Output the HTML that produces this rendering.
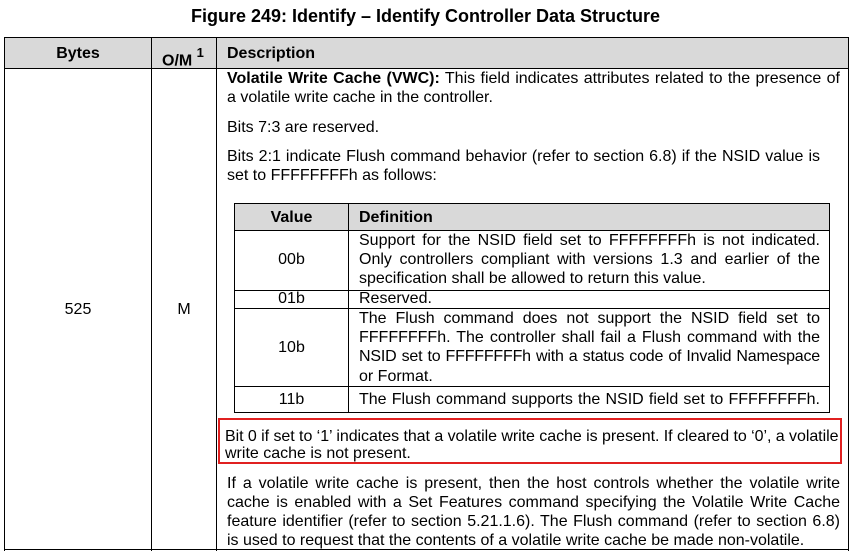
<!DOCTYPE html>
<html><head><meta charset="utf-8"><style>
body{margin:0;width:851px;height:551px;background:#fff;position:relative;overflow:hidden;font-family:"Liberation Sans",Arial,sans-serif;font-size:16px;color:#000}
.a{position:absolute}
.l{position:absolute;white-space:nowrap;line-height:19px}
.j{text-align:justify;text-align-last:justify;white-space:normal}
.h{position:absolute;background:#000}
.c{text-align:center}
</style></head><body>
<div class="a c" style="left:0;width:851px;top:6px;font-weight:bold;font-size:18px">Figure 249: Identify – Identify Controller Data Structure</div>
<div class="a" style="left:5px;top:38px;width:843px;height:30px;background:#d9d9d9"></div>
<div class="h" style="left:4px;top:37px;width:845px;height:1px"></div>
<div class="h" style="left:4px;top:68px;width:845px;height:1px"></div>
<div class="h" style="left:4px;top:37px;width:1px;height:514px"></div>
<div class="h" style="left:848px;top:37px;width:1px;height:514px"></div>
<div class="h" style="left:151px;top:37px;width:1px;height:514px"></div>
<div class="h" style="left:216px;top:37px;width:1px;height:514px"></div>
<div class="h" style="left:4px;top:549px;width:845px;height:1px"></div>
<div class="l c" style="left:5px;width:146px;top:44px;font-weight:bold">Bytes</div>
<div class="l" style="left:162px;top:45px;font-weight:bold">O/M <sup style="font-size:13px;position:relative;top:-2px">1</sup></div>
<div class="l" style="left:227px;top:44px;font-weight:bold">Description</div>
<div class="l c" style="left:5px;width:146px;top:300px">525</div>
<div class="l c" style="left:152px;width:64px;top:300px">M</div>
<div class="l j" style="left:227px;width:613px;top:69px"><b>Volatile Write Cache (VWC):</b> This field indicates attributes related to the presence of</div>
<div class="l" style="left:227px;top:88px">a volatile write cache in the controller.</div>
<div class="l" style="left:227px;top:118px">Bits 7:3 are reserved.</div>
<div class="l j" style="left:227px;width:593px;top:147px">Bits 2:1 indicate Flush command behavior (refer to section 6.8) if the NSID value is</div>
<div class="l" style="left:227px;top:166px">set to FFFFFFFFh as follows:</div>
<div class="a" style="left:234px;top:204px;width:595px;height:26px;background:#d9d9d9"></div>
<div class="h" style="left:234px;top:203px;width:596px;height:1px"></div>
<div class="h" style="left:234px;top:230px;width:596px;height:1px"></div>
<div class="h" style="left:234px;top:290px;width:596px;height:1px"></div>
<div class="h" style="left:234px;top:308px;width:596px;height:1px"></div>
<div class="h" style="left:234px;top:386px;width:596px;height:1px"></div>
<div class="h" style="left:234px;top:412px;width:596px;height:1px"></div>
<div class="h" style="left:234px;top:203px;width:1px;height:210px"></div>
<div class="h" style="left:829px;top:203px;width:1px;height:210px"></div>
<div class="h" style="left:348px;top:203px;width:1px;height:210px"></div>
<div class="l c" style="left:235px;width:113px;top:208px;font-weight:bold">Value</div>
<div class="l" style="left:359px;top:208px;font-weight:bold">Definition</div>
<div class="l c" style="left:235px;width:113px;top:250px">00b</div>
<div class="l j" style="left:359px;width:461px;top:231px">Support for the NSID field set to FFFFFFFFh is not indicated.</div>
<div class="l j" style="left:359px;width:461px;top:250px">Only controllers compliant with versions 1.3 and earlier of the</div>
<div class="l" style="left:359px;top:269px">specification shall be allowed to return this value.</div>
<div class="l c" style="left:235px;width:113px;top:289px">01b</div>
<div class="l" style="left:359px;top:289px">Reserved.</div>
<div class="l c" style="left:235px;width:113px;top:338px">10b</div>
<div class="l j" style="left:359px;width:461px;top:309px">The Flush command does not support the NSID field set to</div>
<div class="l j" style="left:359px;width:461px;top:328px">FFFFFFFFh. The controller shall fail a Flush command with the</div>
<div class="l j" style="left:359px;width:461px;top:347px;letter-spacing:-0.2px">NSID set to FFFFFFFFh with a status code of Invalid Namespace</div>
<div class="l" style="left:359px;top:367px">or Format.</div>
<div class="l c" style="left:235px;width:113px;top:390px">11b</div>
<div class="l j" style="left:359px;width:461px;top:390px">The Flush command supports the NSID field set to FFFFFFFFh.</div>
<div class="a" style="left:218px;top:418px;width:620px;height:42px;border:2px solid #e02020"></div>
<div class="l" style="left:225px;top:427px;letter-spacing:-0.05px">Bit 0 if set to ‘1’ indicates that a volatile write cache is present. If cleared to ‘0’, a volatile</div>
<div class="l" style="left:225px;top:444px">write cache is not present.</div>
<div class="l j" style="left:227px;width:613px;top:474px">If a volatile write cache is present, then the host controls whether the volatile write</div>
<div class="l j" style="left:227px;width:613px;top:493px">cache is enabled with a Set Features command specifying the Volatile Write Cache</div>
<div class="l j" style="left:227px;width:613px;top:512px">feature identifier (refer to section 5.21.1.6). The Flush command (refer to section 6.8)</div>
<div class="l" style="left:227px;top:531px">is used to request that the contents of a volatile write cache be made non-volatile.</div>
</body></html>
